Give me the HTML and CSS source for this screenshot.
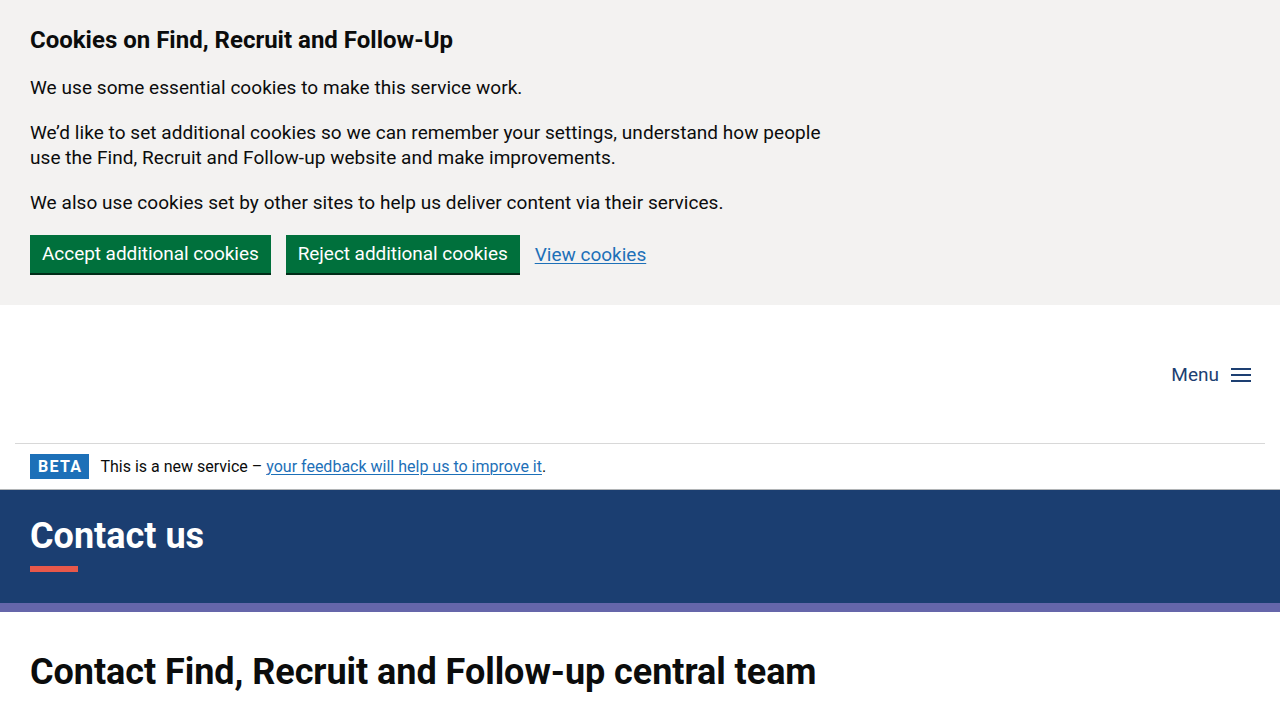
FILE: index.html
```html
<!DOCTYPE html>
<html lang="en">
<head>
<meta charset="utf-8">
<title>Contact us</title>
<link rel="stylesheet" href="styles.css">
</head>
<body>
<div class="cookie-banner">
  <h2 class="cookie-title">Cookies on Find, Recruit and Follow-Up</h2>
  <div class="cookie-body">
    <p>We use some essential cookies to make this service work.</p>
    <p>We’d like to set additional cookies so we can remember your settings, understand how people use the Find, Recruit and Follow-up website and make improvements.</p>
    <p>We also use cookies set by other sites to help us deliver content via their services.</p>
  </div>
  <div class="cookie-actions">
    <button class="btn">Accept additional cookies</button>
    <button class="btn">Reject additional cookies</button>
    <a class="link" href="#">View cookies</a>
  </div>
</div>
<header class="site-header">
  <div class="header-inner">
    <button class="menu-btn">Menu
      <svg width="20" height="16" viewBox="0 0 20 16" aria-hidden="true"><rect x="0" y="1" width="20" height="2" fill="#1d3f72"/><rect x="0" y="7" width="20" height="2" fill="#1d3f72"/><rect x="0" y="13" width="20" height="2" fill="#1d3f72"/></svg>
    </button>
  </div>
</header>
<div class="beta-wrap">
  <div class="beta">
    <strong class="beta-tag">BETA</strong>
    <span class="beta-text">This is a new service – <a class="link" href="#">your feedback will help us to improve it</a>.</span>
  </div>
</div>
<section class="hero">
  <h1 class="hero-title">Contact us</h1>
  <div class="hero-bar"></div>
</section>
<div class="stripe"></div>
<main class="main">
  <h2 class="main-title">Contact Find, Recruit and Follow-up central team</h2>
</main>
</body>
</html>
```
FILE: styles.css
```css
* { box-sizing: border-box; }
html, body { margin: 0; padding: 0; }
body {
  font-family: Roboto, "Liberation Sans", Arial, sans-serif;
  color: #0b0c0c;
  background: #fff;
  width: 1280px;
  overflow: hidden;
}
.cookie-banner {
  background: #f3f2f1;
  padding: 24px 30px 30px;
  height: 305px;
}
.cookie-title {
  margin: 0 0 19px;
  font-size: 24px;
  line-height: 32px;
  font-weight: 700;
}
.cookie-body { max-width: 800px; }
.cookie-body p {
  margin: 0 0 20px;
  font-size: 19px;
  line-height: 25px;
  letter-spacing: 0.05px;
}
.cookie-actions {
  display: flex;
  align-items: center;
  gap: 15px;
}
.btn {
  font-family: inherit;
  font-size: 19px;
  line-height: 25px;
  color: #fff;
  background: #00703c;
  border: 0;
  padding: 6px 12px 7px;
  box-shadow: 0 2px 0 #002d18;
  margin-bottom: 2px;
  letter-spacing: -0.05px;
  cursor: pointer;
}
.link {
  color: #1d70b8;
  text-decoration: underline;
  text-decoration-thickness: 1px;
  text-underline-offset: 2px;
}
.cookie-actions .link { font-size: 19px; line-height: 25px; margin-top: -2px; }
.site-header { height: 139px; padding: 0 15px; }
.header-inner {
  height: 139px;
  display: flex;
  align-items: center;
  justify-content: flex-end;
  padding: 0 14px 0 15px;
  border-bottom: 1px solid #d8d8d8;
}
.menu-btn {
  display: flex;
  align-items: center;
  gap: 12px;
  background: none;
  border: 0;
  padding: 0;
  font-family: inherit;
  font-size: 19px;
  color: #1d3f72;
  margin-top: 1px;
}
.beta-wrap { border-bottom: 1px solid #b1b4b6; }
.beta {
  display: flex;
  align-items: center;
  gap: 11px;
  padding: 9px 30px 10px;
  height: 45px;
}
.beta-tag {
  display: inline-block;
  background: #1d70b8;
  color: #fff;
  font-size: 16px;
  font-weight: 700;
  letter-spacing: 1.3px;
  line-height: 19px;
  padding: 3px 7px 3px 8px;
  height: 25px;
}
.beta-text { font-size: 16px; line-height: 20px; margin-top: 1px; }
.hero {
  background: #1b3e71;
  height: 113px;
  padding: 24px 30px 0;
}
.hero-title {
  margin: 0;
  color: #fff;
  font-size: 36px;
  line-height: 44px;
  font-weight: 700;
}
.hero-bar {
  width: 48px;
  height: 6px;
  background: #e8584a;
  margin-top: 8px;
}
.stripe { height: 9px; background: #6566aa; }
.main { padding: 38px 30px 0; }
.main-title {
  margin: 0;
  font-size: 36px;
  line-height: 44px;
  font-weight: 700;
  letter-spacing: -0.05px;
}
```
